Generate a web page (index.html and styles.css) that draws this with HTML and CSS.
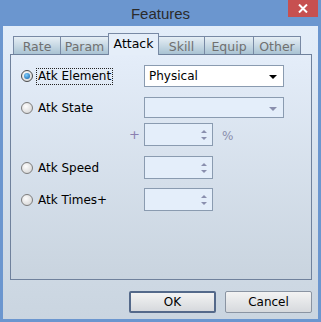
FILE: index.html
```html
<!DOCTYPE html>
<html lang="en">
<head>
    <meta charset="UTF-8">
    <title>Features</title>
    <link rel="stylesheet" href="styles.css">
</head>
<body>
    <div class="window">
        <div class="titlebar">
            <span class="title">Features</span>
            <div class="close">
                <svg width="10" height="9" viewBox="0 0 10 9"><path d="M1 0.5 L9 8.5 M9 0.5 L1 8.5" stroke="#fff" stroke-width="2"/></svg>
            </div>
        </div>

        <div class="client">
            <div class="tabs">
                <div class="tab w-rate">Rate</div>
                <div class="tab w-param">Param</div>
                <div class="tab active w-attack">Attack</div>
                <div class="tab w-skill">Skill</div>
                <div class="tab w-equip">Equip</div>
                <div class="tab w-other">Other</div>
            </div>

            <div class="panel">
                <div class="row row-element">
                    <label class="opt"><span class="radio checked"></span><span class="focus">Atk Element</span></label>
                    <div class="combo">
                        <span>Physical</span>
                        <span class="arrow"></span>
                    </div>
                </div>

                <div class="row row-state">
                    <label class="opt"><span class="radio"></span><span class="text">Atk State</span></label>
                    <div class="combo disabled">
                        <span></span>
                        <span class="arrow"></span>
                    </div>
                </div>

                <div class="row row-rate">
                    <span class="plus">+</span>
                    <div class="spin">
                        <span class="spin-up"></span>
                        <span class="spin-down"></span>
                    </div>
                    <span class="unit">%</span>
                </div>

                <div class="row row-speed">
                    <label class="opt"><span class="radio"></span><span class="text">Atk Speed</span></label>
                    <div class="spin">
                        <span class="spin-up"></span>
                        <span class="spin-down"></span>
                    </div>
                </div>

                <div class="row row-times">
                    <label class="opt"><span class="radio"></span><span class="text">Atk Times+</span></label>
                    <div class="spin">
                        <span class="spin-up"></span>
                        <span class="spin-down"></span>
                    </div>
                </div>
            </div>

            <div class="buttons">
                <button class="btn default">OK</button>
                <button class="btn">Cancel</button>
            </div>
        </div>
    </div>
</body>
</html>
```

FILE: styles.css
```css
body {
    margin: 0;
    padding: 0;
    font-family: 'DejaVu Sans', 'Noto Sans', sans-serif;
    font-size: 12px;
    color: #000;
}

.window {
    width: 321px;
    height: 322px;
    background-color: #6b96cf;
    display: flex;
    flex-direction: column;
    box-sizing: border-box;
}

.titlebar {
    height: 26px;
    position: relative;
    display: flex;
    align-items: center;
    justify-content: center;
    flex-shrink: 0;
}

.title {
    font-family: 'Liberation Sans', sans-serif;
    font-size: 15px;
    color: #2b2b2b;
    margin-top: 1px;
}

.close {
    position: absolute;
    top: 0;
    left: 288px;
    width: 30px;
    height: 17px;
    background-color: #c75050;
    display: flex;
    align-items: center;
    justify-content: center;
}

.client {
    flex: 1;
    margin: 0 3px 3px 3px;
    background: linear-gradient(#e3edf9, #cad5e0);
    padding: 7px 7px 0 7px;
    display: flex;
    flex-direction: column;
}

/* вкладки */
.tabs {
    display: flex;
    align-items: flex-end;
    height: 21px;
    padding-left: 3px;
    position: relative;
    z-index: 2;
}

.tab {
    box-sizing: border-box;
    height: 18px;
    border: 1px solid #7889a4;
    border-bottom: none;
    margin-right: -1px;
    background: linear-gradient(#e6eef5, #a9c3d3);
    color: #707070;
    font-size: 12.5px;
    text-align: center;
    line-height: 19px;
}

.tab.active {
    height: 22px;
    margin-bottom: -1px;
    background: #e5eef9;
    color: #000;
    line-height: 20px;
    position: relative;
    z-index: 3;
}

.w-rate { width: 48px; }
.w-param { width: 49px; }
.w-attack { width: 51px; }
.w-skill { width: 47px; }
.w-equip { width: 50px; }
.w-other { width: 48px; }

.panel {
    box-sizing: border-box;
    width: 302px;
    height: 226px;
    border: 1px solid #6f819c;
    background: linear-gradient(#e4edf9, #c9d4df);
    padding: 10px 0 0 10px;
}

.row {
    display: flex;
    align-items: center;
}

.opt {
    width: 123px;
    display: flex;
    align-items: center;
}

.radio {
    box-sizing: border-box;
    width: 12px;
    height: 12px;
    border-radius: 50%;
    border: 1px solid #7d7d7d;
    background: radial-gradient(circle at 40% 35%, #fdfdfd, #cfcfcf);
    margin-right: 4px;
    position: relative;
    flex-shrink: 0;
}

.radio.checked {
    border-color: #4a4a4a;
}

.radio.checked::after {
    content: '';
    position: absolute;
    left: 2px;
    top: 2px;
    width: 6px;
    height: 6px;
    border-radius: 50%;
    background: radial-gradient(circle at 40% 35%, #7fcfff, #0b5aa3);
}

.focus {
    outline: 1px dotted #222;
    padding: 0 1px;
    line-height: 15px;
}

.text {
    padding: 0 1px;
}

.combo {
    box-sizing: border-box;
    width: 140px;
    height: 22px;
    border: 1px solid #8a9bb0;
    background: #fff;
    display: flex;
    align-items: center;
    justify-content: space-between;
    padding: 0 6px 0 4px;
}

.combo.disabled {
    height: 21px;
    background: #e4eefa;
}

.arrow {
    width: 0;
    height: 0;
    border-left: 4px solid transparent;
    border-right: 4px solid transparent;
    border-top: 4px solid #000;
    margin-top: 2px;
}

.combo.disabled .arrow {
    border-top-color: #8a8fae;
}

.spin {
    box-sizing: border-box;
    width: 69px;
    height: 23px;
    border: 1px solid #8a9bb0;
    background: #e4eefa;
    display: flex;
    flex-direction: column;
    align-items: flex-end;
    justify-content: center;
    gap: 4px;
    padding-right: 5px;
}

.spin-up,
.spin-down {
    width: 0;
    height: 0;
    border-left: 3px solid transparent;
    border-right: 3px solid transparent;
}

.spin-up { border-bottom: 3px solid #8a8fae; }
.spin-down { border-top: 3px solid #8a8fae; }

.row-element { margin-top: 0; }
.row-state { margin-top: 10px; }
.row-rate { margin-top: 5px; }
.row-speed { margin-top: 10px; }
.row-times { margin-top: 9px; }

.plus {
    width: 123px;
    text-align: right;
    padding-right: 4px;
    box-sizing: border-box;
    color: #8a7fb0;
    font-size: 13px;
}

.unit {
    margin-left: 9px;
    color: #8a8fae;
    margin-top: 2px;
}

.buttons {
    display: flex;
    justify-content: flex-end;
    gap: 9px;
    margin-top: 11px;
    width: 302px;
}

.btn {
    box-sizing: border-box;
    width: 87px;
    height: 22px;
    border: 1px solid #8a94a2;
    border-radius: 2px;
    background: linear-gradient(#f3f3f3, #d6d9dd);
    font-family: 'DejaVu Sans', sans-serif;
    font-size: 12px;
    color: #000;
    padding: 0;
}

.btn.default {
    border: 2px solid #54698a;
}
```
